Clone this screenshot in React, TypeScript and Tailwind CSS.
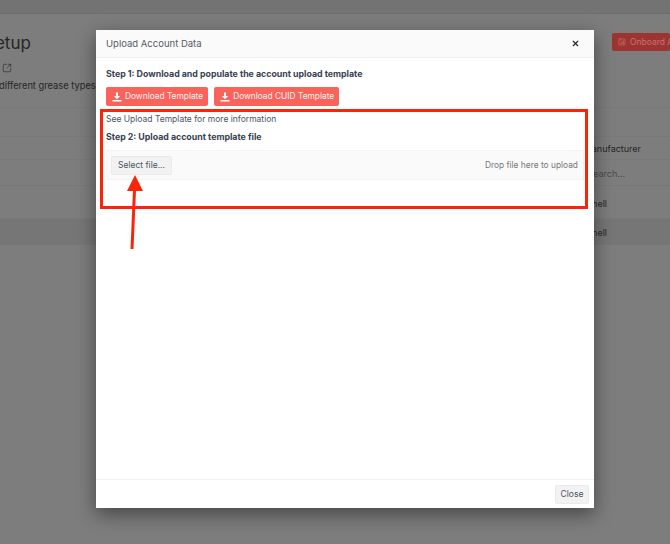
import { X, SquareArrowOutUpRight, SquareArrowDownRight } from 'lucide-react'

function BackgroundPage() {
  return (
    <div className="h-[544px] overflow-hidden bg-[#7d7d7d] text-[#262626]">
      <div className="h-[14px] bg-[#737373] border-b border-[#6e6e6e]" />
      <div className="flex justify-between h-[94px] border-b border-[#797979]">
        <div className="-ml-[16px] pt-[17px]">
          <h1 className="text-[17px] leading-[24px]">Setup</h1>
          <div className="flex h-[14px] mt-[6px] pl-[18px] items-center">
            <SquareArrowOutUpRight size={10} strokeWidth={1.5} />
          </div>
          <p className="text-[9.3px] leading-[14px] mt-[4px] pl-[15px] whitespace-nowrap">different grease types</p>
        </div>
        <div className="pt-[19px]">
          <div className="flex items-center gap-[4px] w-[58px] h-[18px] pl-[6px] bg-[#9c3532] rounded-[2px] text-[8.5px] text-[#c9716d] whitespace-nowrap overflow-hidden">
            <SquareArrowDownRight size={8} className="shrink-0" />
            Onboard Account
          </div>
        </div>
      </div>
      <div className="h-[29px] border-b border-[#797979]" />
      <div className="flex items-center justify-end h-[23px] pt-[2px] border-b border-[#797979] text-[9px] pr-[29px]">
        Manufacturer
      </div>
      <div className="flex items-center justify-end h-[26px] pt-[3px] border-b border-[#797979] text-[9px] text-[#4a4a4a] pr-[45px]">
        Search...
      </div>
      <div className="flex items-center justify-end h-[33px] pt-[3px] border-b border-[#797979] text-[9px] pr-[63px]">
        Shell
      </div>
      <div className="flex items-center justify-end h-[26px] pt-[2px] bg-[#767676] text-[9px] pr-[63px]">
        Shell
      </div>
    </div>
  )
}

function DownloadIcon() {
  return (
    <svg width="10" height="10" viewBox="0 0 10 10" fill="white" className="shrink-0">
      <path d="M4 0.5 H6 V4 H8.2 L5 7.2 L1.8 4 H4 Z" />
      <rect x="0.5" y="8" width="9" height="1.5" />
    </svg>
  )
}

function DownloadButton({ label }: { label: string }) {
  return (
    <button className="flex items-center gap-[3px] h-[19px] pl-[6px] pr-[5px] bg-[#fa625c] rounded-[2px] text-[8.35px] text-[#fff3f2] whitespace-nowrap">
      <DownloadIcon />
      {label}
    </button>
  )
}

function UploadModal() {
  return (
    <div className="absolute left-[96px] top-[30px] w-[498px] h-[478px] flex flex-col bg-white shadow-[0_6px_18px_rgba(0,0,0,0.45)] text-[#4b5563]">
      <div className="flex items-center justify-between h-[28px] pl-[10px] pr-[14px] bg-[#fafafa] border-b border-[#f0f0f0]">
        <span className="text-[9.5px] pt-[1px] text-[#555b66]">Upload Account Data</span>
        <X size={9} strokeWidth={3} className="text-[#222222]" />
      </div>
      <div className="flex-1 px-[10px] pt-[10px]">
        <p className="text-[8.8px] leading-[12px] font-bold text-[#374151]">
          Step 1: Download and populate the account upload template
        </p>
        <div className="flex gap-[6px] mt-[7px]">
          <DownloadButton label="Download Template" />
          <DownloadButton label="Download CUID Template" />
        </div>
        <p className="text-[8.5px] leading-[12px] mt-[7px]">See Upload Template for more information</p>
        <p className="text-[8.8px] leading-[12px] font-bold text-[#374151] mt-[6px]">
          Step 2: Upload account template file
        </p>
        <div className="flex items-center justify-between h-[30px] mt-[7px] pl-[4px] pr-[5px] bg-[#fafafa] border border-[#f3f3f3] text-[8.5px]">
          <button className="h-[19px] w-[61px] bg-[#f2f2f2] border border-[#ebebeb] rounded-[2px]">Select file...</button>
          <span className="text-[8.4px] text-[#777777]">Drop file here to upload</span>
        </div>
      </div>
      <div className="flex items-center justify-end h-[29px] px-[5px] border-t border-[#efefef]">
        <button className="h-[19px] w-[34px] bg-[#f2f2f2] border border-[#ebebeb] rounded-[2px] text-[8.5px]">Close</button>
      </div>
    </div>
  )
}

export default function App() {
  return (
    <div className="relative w-[670px] h-[544px] overflow-hidden font-['Inter',sans-serif]">
      <BackgroundPage />
      <UploadModal />
      {/* red annotation over the screenshot */}
      <div className="absolute left-[100px] top-[109px] w-[488px] h-[100px] border-[3px] border-[#fa2408]" />
      <svg className="absolute left-[120px] top-[170px]" width="24" height="82" viewBox="0 0 24 82">
        <path d="M15 5 L7 21 L23 21 Z" fill="#fa2408" />
        <path d="M14.5 20 L12 79" stroke="#fa2408" strokeWidth="3" fill="none" />
      </svg>
    </div>
  )
}
